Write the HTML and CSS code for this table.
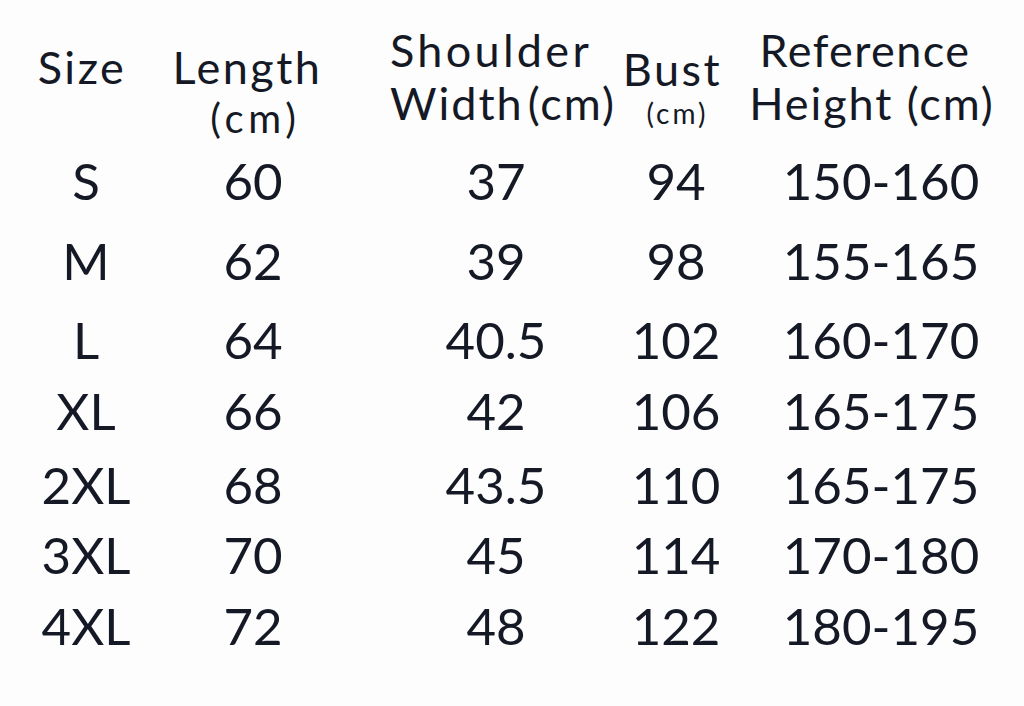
FILE: index.html
```html
<!DOCTYPE html>
<html lang="en">
<head>
<meta charset="utf-8">
<title>Size Chart</title>
<link rel="stylesheet" href="styles.css">
</head>
<body>
<main class="chart">
  <div class="cell head head-size"><span class="line">Size</span></div>
  <div class="cell head head-length"><span class="line line-shift">Length</span><span class="line unit-mid">(cm)</span></div>
  <div class="cell head head-shoulder">
    <div class="stack"><span class="line line-wide">Shoulder</span><span class="line line-width">Width<span class="tight">(cm)</span></span></div>
  </div>
  <div class="cell head head-bust"><span class="line line-shift-sm">Bust</span><span class="line unit-small">(cm)</span></div>
  <div class="cell head head-ref"><span class="line line-ref">Reference</span><span class="line line-height">Height (cm)</span></div>

  <div class="cell">S</div><div class="cell">60</div><div class="cell">37</div><div class="cell">94</div><div class="cell">150-160</div>
  <div class="cell">M</div><div class="cell">62</div><div class="cell">39</div><div class="cell">98</div><div class="cell">155-165</div>
  <div class="cell">L</div><div class="cell">64</div><div class="cell">40.5</div><div class="cell">102</div><div class="cell">160-170</div>
  <div class="cell">XL</div><div class="cell">66</div><div class="cell">42</div><div class="cell">106</div><div class="cell">165-175</div>
  <div class="cell">2XL</div><div class="cell">68</div><div class="cell">43.5</div><div class="cell">110</div><div class="cell">165-175</div>
  <div class="cell">3XL</div><div class="cell">70</div><div class="cell">45</div><div class="cell">114</div><div class="cell">170-180</div>
  <div class="cell">4XL</div><div class="cell">72</div><div class="cell">48</div><div class="cell">122</div><div class="cell">180-195</div>
</main>
</body>
</html>
```

FILE: styles.css
```css
html, body {
  margin: 0;
  padding: 0;
  overflow: hidden;
  background: #fdfdfd;
}

body {
  width: 1024px;
  height: 706px;
  color: #151925;
  font-family: Lato, "Liberation Sans", sans-serif;
}

.chart {
  display: grid;
  grid-template-columns: 172px 162px 324px 36px 374px;
  grid-template-rows: 155px 80px 79px 71px 74px 70px 71px 51px;
  width: 1068px;
}

.cell {
  display: flex;
  justify-content: center;
  align-items: flex-start;
  white-space: nowrap;
  font-size: 51px;
  line-height: 51px;
}

.head {
  flex-direction: column;
  align-items: center;
  justify-content: flex-start;
}

.line {
  display: block;
  font-size: 45px;
  line-height: 53px;
  letter-spacing: 2.5px;
}

.stack {
  display: flex;
  flex-direction: column;
  align-items: flex-start;
}

.line-wide {
  letter-spacing: 3.3px;
}

.line-width {
  letter-spacing: 2px;
}

.line-ref {
  letter-spacing: 1.4px;
  margin-right: 6px;
}

.line-height {
  letter-spacing: 1.9px;
  margin-left: 8px;
}

.line-shift {
  margin-right: 11px;
}

.line-shift-sm {
  margin-right: 7px;
}

.tight {
  margin-left: 4px;
}

.unit-mid {
  font-size: 40px;
  line-height: 49px;
  letter-spacing: 4.8px;
  margin-left: 5px;
}

.unit-small {
  font-size: 28px;
  line-height: 34px;
  letter-spacing: 3px;
  margin-left: 3px;
}

.head-size {
  padding-top: 41px;
  padding-right: 8px;
}

.head-length {
  padding-top: 41px;
}

.head-shoulder {
  padding-top: 24px;
  padding-left: 14px;
}

.head-bust {
  padding-top: 43px;
}

.head-ref {
  padding-top: 24px;
  padding-right: 26px;
}
```
